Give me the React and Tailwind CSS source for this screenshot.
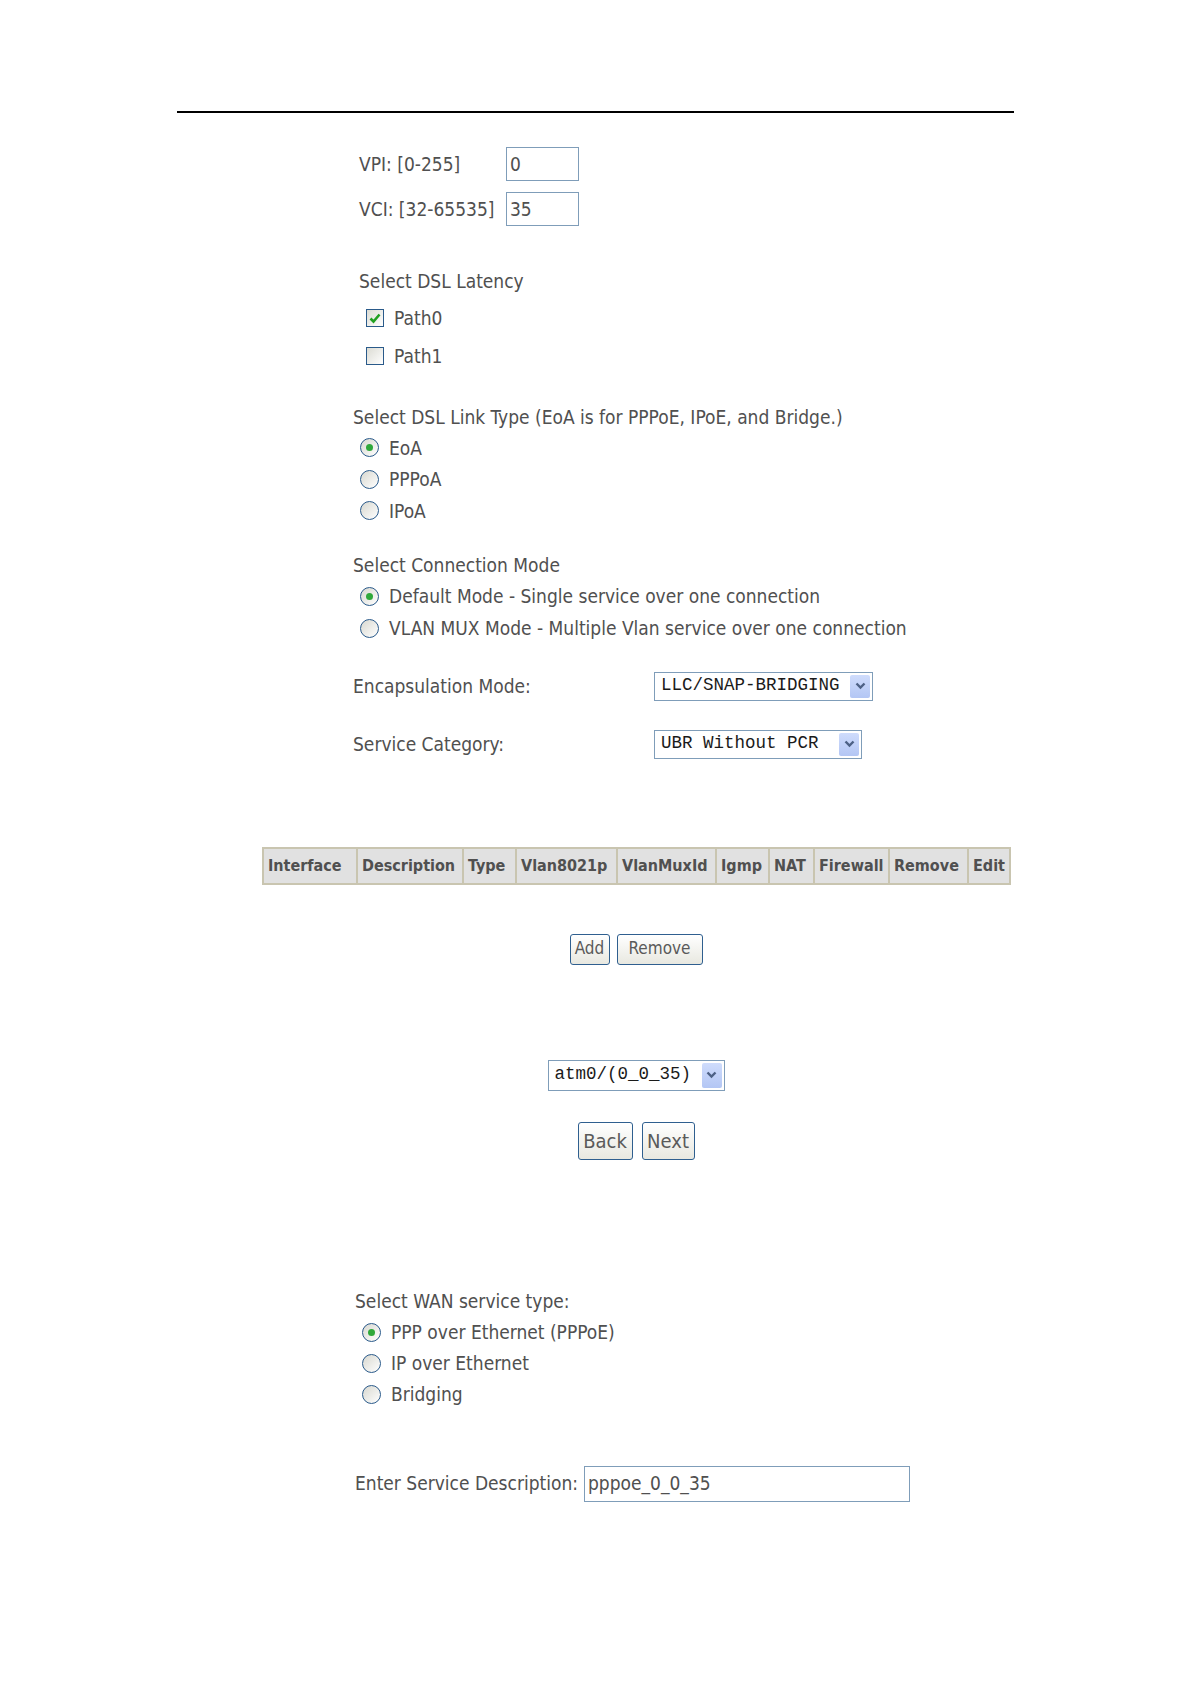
import { useState } from 'react'

const bodyFont = "[font-family:'DejaVu_Sans_Condensed','Liberation_Sans',sans-serif]"
const monoFont = "[font-family:'Liberation_Mono','DejaVu_Sans_Mono',monospace]"

const headers = [
  ['Interface', 'w-[94px]'],
  ['Description', 'w-[106px]'],
  ['Type', 'w-[53px]'],
  ['Vlan8021p', 'w-[101px]'],
  ['VlanMuxId', 'w-[99px]'],
  ['Igmp', 'w-[53px]'],
  ['NAT', 'w-[45px]'],
  ['Firewall', 'w-[75px]'],
  ['Remove', 'w-[79px]'],
  ['Edit', 'w-[42px]'],
]

function Radio({ checked }) {
  return (
    <span className="flex h-[19px] w-[19px] shrink-0 items-center justify-center rounded-full border-[1.5px] border-[#2a5a8a] bg-linear-to-br from-[#d8d8d0] to-white">
      {checked ? <span className="h-[7px] w-[7px] rounded-full bg-[#2fa83a]" /> : null}
    </span>
  )
}

function Checkbox({ checked }) {
  return (
    <span className="flex h-[18px] w-[18px] shrink-0 items-center justify-center border-[1.5px] border-[#2a5a8a] bg-linear-to-br from-[#dcdcd4] to-white">
      {checked ? (
        <svg width="12" height="11" viewBox="0 0 12 11">
          <path d="M1.5 5.5 L4.5 8.5 L10.5 1.5" fill="none" stroke="#21a121" strokeWidth="2.6" />
        </svg>
      ) : null}
    </span>
  )
}

function Chevron() {
  return (
    <svg width="11" height="8" viewBox="0 0 11 8">
      <path d="M1.5 1.5 L5.5 5.5 L9.5 1.5" fill="none" stroke="#4d6185" strokeWidth="2.4" />
    </svg>
  )
}

function SelectBox({ value, width }) {
  return (
    <div className={`flex h-[29px] items-center border border-[#7f9db9] bg-white pl-[6px] pr-[2px] ${width}`}>
      <span className={`flex-1 whitespace-pre text-[17.5px] leading-none text-[#1a1a1a] ${monoFont}`}>{value}</span>
      <span className="flex h-[23px] w-[20px] items-center justify-center rounded-[2px] bg-linear-to-b from-[#cfdcfc] to-[#b3c6f4]">
        <Chevron />
      </span>
    </div>
  )
}

function TextBox({ value, width, height }) {
  return (
    <div className={`flex items-center border border-[#7f9db9] bg-white pl-[3px] text-[19px] text-[#505050] ${width} ${height}`}>
      {value}
    </div>
  )
}

function XpButton({ label, size }) {
  return (
    <button
      type="button"
      className={`flex items-center justify-center rounded-[3px] border border-[#2f5f8f] bg-linear-to-b from-white to-[#e8e8e0] text-[#5a5a5a] ${size}`}
    >
      {label}
    </button>
  )
}

function RadioRow({ label, checked, height }) {
  return (
    <div className={`flex items-center pl-[7px] ${height}`}>
      <Radio checked={checked} />
      <span className="ml-[10px] whitespace-nowrap">{label}</span>
    </div>
  )
}

export default function App() {
  const [linkType] = useState('EoA')

  return (
    <div className={`min-h-[1684px] w-[1190px] bg-white pt-[111px] text-[19px] text-[#505050] ${bodyFont}`}>
      <div className="ml-[177px] h-[2px] w-[837px] bg-black" />

      <div className="ml-[359px] mt-[34px]">
        <div className="flex h-[34px] items-center">
          <span className="w-[147px] shrink-0 whitespace-nowrap">VPI: [0-255]</span>
          <TextBox value="0" width="w-[73px]" height="h-[34px]" />
        </div>
        <div className="mt-[11px] flex h-[34px] items-center">
          <span className="w-[147px] shrink-0 whitespace-nowrap">VCI: [32-65535]</span>
          <TextBox value="35" width="w-[73px]" height="h-[34px]" />
        </div>

        <div className="mt-[40px] flex h-[30px] items-center">Select DSL Latency</div>
        <div className="mt-[7px] flex h-[30px] items-center pl-[7px]">
          <Checkbox checked />
          <span className="ml-[10px]">Path0</span>
        </div>
        <div className="mt-[8px] flex h-[30px] items-center pl-[7px]">
          <Checkbox checked={false} />
          <span className="ml-[10px]">Path1</span>
        </div>
      </div>

      <div className="ml-[353px] mt-[31px]">
        <div className="flex h-[30px] items-center">Select DSL Link Type (EoA is for PPPoE, IPoE, and Bridge.)</div>
        {['EoA', 'PPPoA', 'IPoA'].map((item) => (
          <RadioRow key={item} label={item} checked={item === linkType} height="h-[31.5px]" />
        ))}

        <div className="mt-[24px] flex h-[30px] items-center">Select Connection Mode</div>
        <RadioRow label="Default Mode - Single service over one connection" checked height="h-[32px]" />
        <RadioRow label="VLAN MUX Mode - Multiple Vlan service over one connection" checked={false} height="h-[32px]" />

        <div className="mt-[27px] flex h-[29px] items-center">
          <span className="w-[301px] shrink-0">Encapsulation Mode:</span>
          <SelectBox value="LLC/SNAP-BRIDGING" width="w-[219px]" />
        </div>
        <div className="mt-[29px] flex h-[29px] items-center">
          <span className="w-[301px] shrink-0">Service Category:</span>
          <SelectBox value="UBR Without PCR" width="w-[208px]" />
        </div>
      </div>

      <div className="ml-[262px] mt-[88px] w-[748px]">
        <table className="w-[748px] table-fixed border-collapse border-2 border-[#d2d0c4]">
          <thead>
            <tr className="h-[36px]">
              {headers.map(([name, width]) => (
                <th
                  key={name}
                  className={`border-2 border-[#c9c5b0] bg-[#e1e1e1] pl-[4px] text-left text-[16px] font-bold whitespace-nowrap text-[#505050] ${width}`}
                >
                  {name}
                </th>
              ))}
            </tr>
          </thead>
        </table>

        <div className="mt-[49px] flex justify-center gap-[7px] text-[17px]">
          <XpButton label="Add" size="h-[31px] w-[40px]" />
          <XpButton label="Remove" size="h-[31px] w-[86px]" />
        </div>

        <div className="mt-[95px] flex justify-center">
          <div className="flex h-[31px] w-[177px] items-center border border-[#7f9db9] bg-white pl-[6px] pr-[2px]">
            <span className={`flex-1 whitespace-pre text-[17.5px] leading-none text-[#1a1a1a] ${monoFont}`}>atm0/(0_0_35)</span>
            <span className="flex h-[25px] w-[20px] items-center justify-center rounded-[2px] bg-linear-to-b from-[#cfdcfc] to-[#b3c6f4]">
              <Chevron />
            </span>
          </div>
        </div>

        <div className="mt-[31px] flex justify-center gap-[9px] text-[20px]">
          <XpButton label="Back" size="h-[38px] w-[55px]" />
          <XpButton label="Next" size="h-[38px] w-[53px]" />
        </div>
      </div>

      <div className="ml-[355px] mt-[127px]">
        <div className="flex h-[30px] items-center">Select WAN service type:</div>
        <RadioRow label="PPP over Ethernet (PPPoE)" checked height="h-[31px]" />
        <RadioRow label="IP over Ethernet" checked={false} height="h-[31px]" />
        <RadioRow label="Bridging" checked={false} height="h-[31px]" />

        <div className="mt-[56px] flex h-[36px] items-center">
          <span className="w-[229px] shrink-0 whitespace-nowrap">Enter Service Description:</span>
          <TextBox value="pppoe_0_0_35" width="w-[326px]" height="h-[36px]" />
        </div>
      </div>
    </div>
  )
}
